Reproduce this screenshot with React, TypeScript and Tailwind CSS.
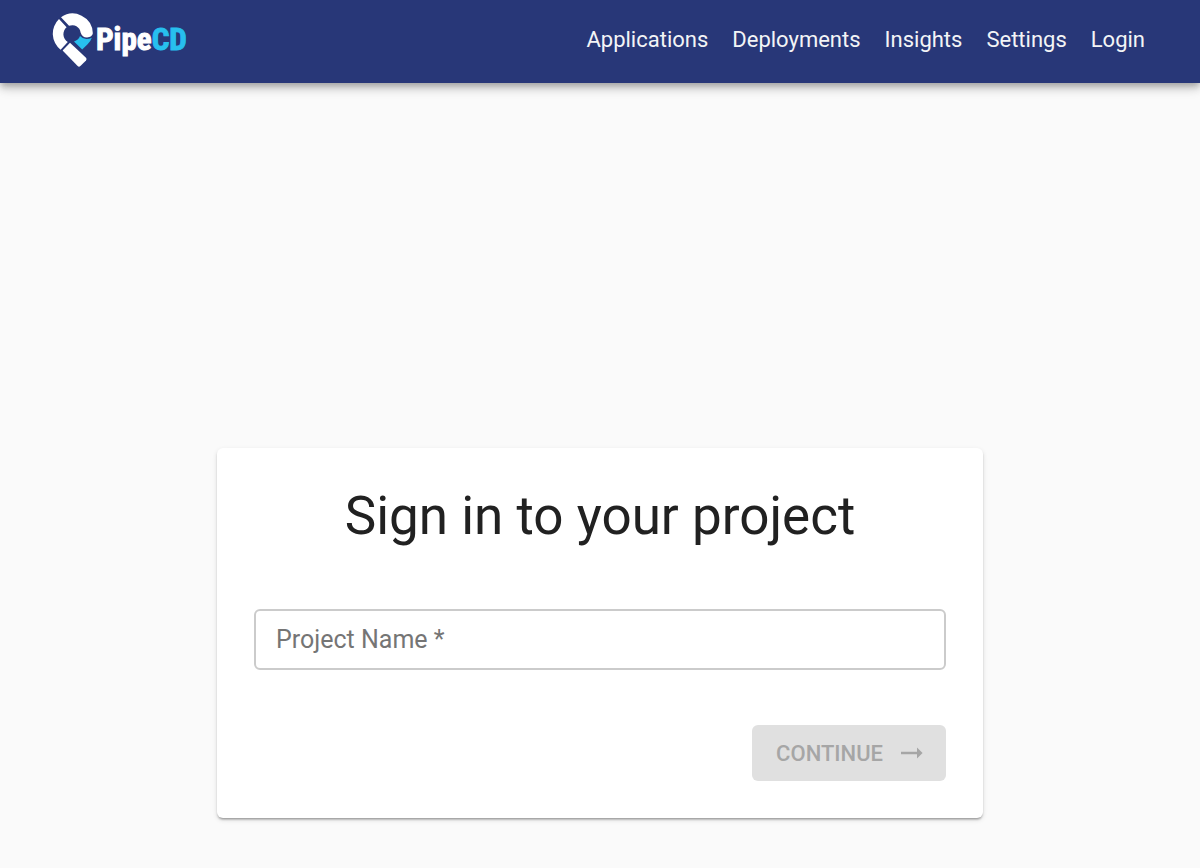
import { useState } from "react";

const NAV_LINKS = ["Applications", "Deployments", "Insights", "Settings", "Login"];

function Logo() {
  return (
    <svg width="136" height="56" viewBox="53 12 136 56" role="img" aria-label="PipeCD">
      <g fill="#fff">
        <path d="M62 17.2A20.2 20.2 0 0 1 93.8 33C93.8 35.8 91 37.4 88 37.4C84.6 37.4 82.8 35.6 81.6 32.4A8.4 8.4 0 0 0 70 25.8Z" />
        <path d="M60 19A20.5 20.5 0 0 0 61.6 49.8L68.8 42A9.2 9.2 0 0 1 67.6 27.2Z" />
        <path d="M71 42.8L63.6 50.4L78.6 66Q80 67.4 81.4 66L87 60.4Q88.2 59 87 57.7Z" />
      </g>
      <path
        fill="#27bfee"
        d="M75 41.4Q79.4 40.2 81 36Q83.8 39 87.3 39Q90.3 39 92.8 37.7Q91.6 41.5 88.6 44.2L83.2 49.4Z"
      />
      <text
        x="97"
        y="50"
        fontSize="31"
        fontWeight="700"
        fill="#fff"
        stroke="#fff"
        strokeWidth="1"
        fontFamily="'Liberation Sans Narrow', 'Roboto Condensed', 'Open Sans Condensed', sans-serif"
      >
        Pipe
        <tspan fill="#27bfee" stroke="#27bfee">
          CD
        </tspan>
      </text>
    </svg>
  );
}

function Header() {
  return (
    <header className="relative flex items-center justify-between bg-[#283778] px-[52px] pt-3 pb-[15px] shadow-[0_3px_6px_-1px_rgba(0,0,0,0.2),0_6px_8px_0_rgba(0,0,0,0.14),0_2px_15px_0_rgba(0,0,0,0.12)]">
      <a href="#home">
        <Logo />
      </a>
      <nav className="flex gap-6 pr-[3px] text-[22px] leading-8 text-gray-100">
        {NAV_LINKS.map((label) => (
          <a key={label} href={`#${label.toLowerCase()}`}>
            {label}
          </a>
        ))}
      </nav>
    </header>
  );
}

function SignInCard() {
  const [project, setProject] = useState("");

  return (
    <form
      className="flex w-full max-w-[766px] flex-col rounded-md bg-white p-[37px] shadow-[0_3px_2px_-2px_rgba(0,0,0,0.2),0_2px_2px_0_rgba(0,0,0,0.14),0_2px_5px_0_rgba(0,0,0,0.12)]"
      onSubmit={(event) => event.preventDefault()}
    >
      <h1 className="text-center text-[53px] leading-[63px] text-[#212121]">Sign in to your project</h1>
      <input
        aria-label="Project Name"
        placeholder="Project Name *"
        required
        value={project}
        onChange={(event) => setProject(event.target.value)}
        className="mt-[61px] h-[61px] w-full rounded-md border-2 border-[#cbcbcb] px-5 text-[25px] text-[#212121] placeholder:text-[#757575]"
      />
      <button
        type="submit"
        disabled={!project}
        className="mt-[55px] flex h-14 items-center gap-[18px] self-end rounded-md bg-[#e0e0e0] pr-[23px] pl-6 text-[22px] font-medium text-[#a6a6a6]"
      >
        CONTINUE
        <svg width="22" height="12" viewBox="0 0 22 12" fill="currentColor" aria-hidden="true">
          <path d="M0 4.8H16V0.6L21.6 6L16 11.4V7.2H0Z" />
        </svg>
      </button>
    </form>
  );
}

export default function App() {
  return (
    <div className="flex min-h-screen flex-col bg-[#fafafa] font-[Roboto,sans-serif]">
      <Header />
      <main className="flex flex-1 flex-col items-center px-6 pt-[365px] pb-12">
        <SignInCard />
      </main>
    </div>
  );
}
